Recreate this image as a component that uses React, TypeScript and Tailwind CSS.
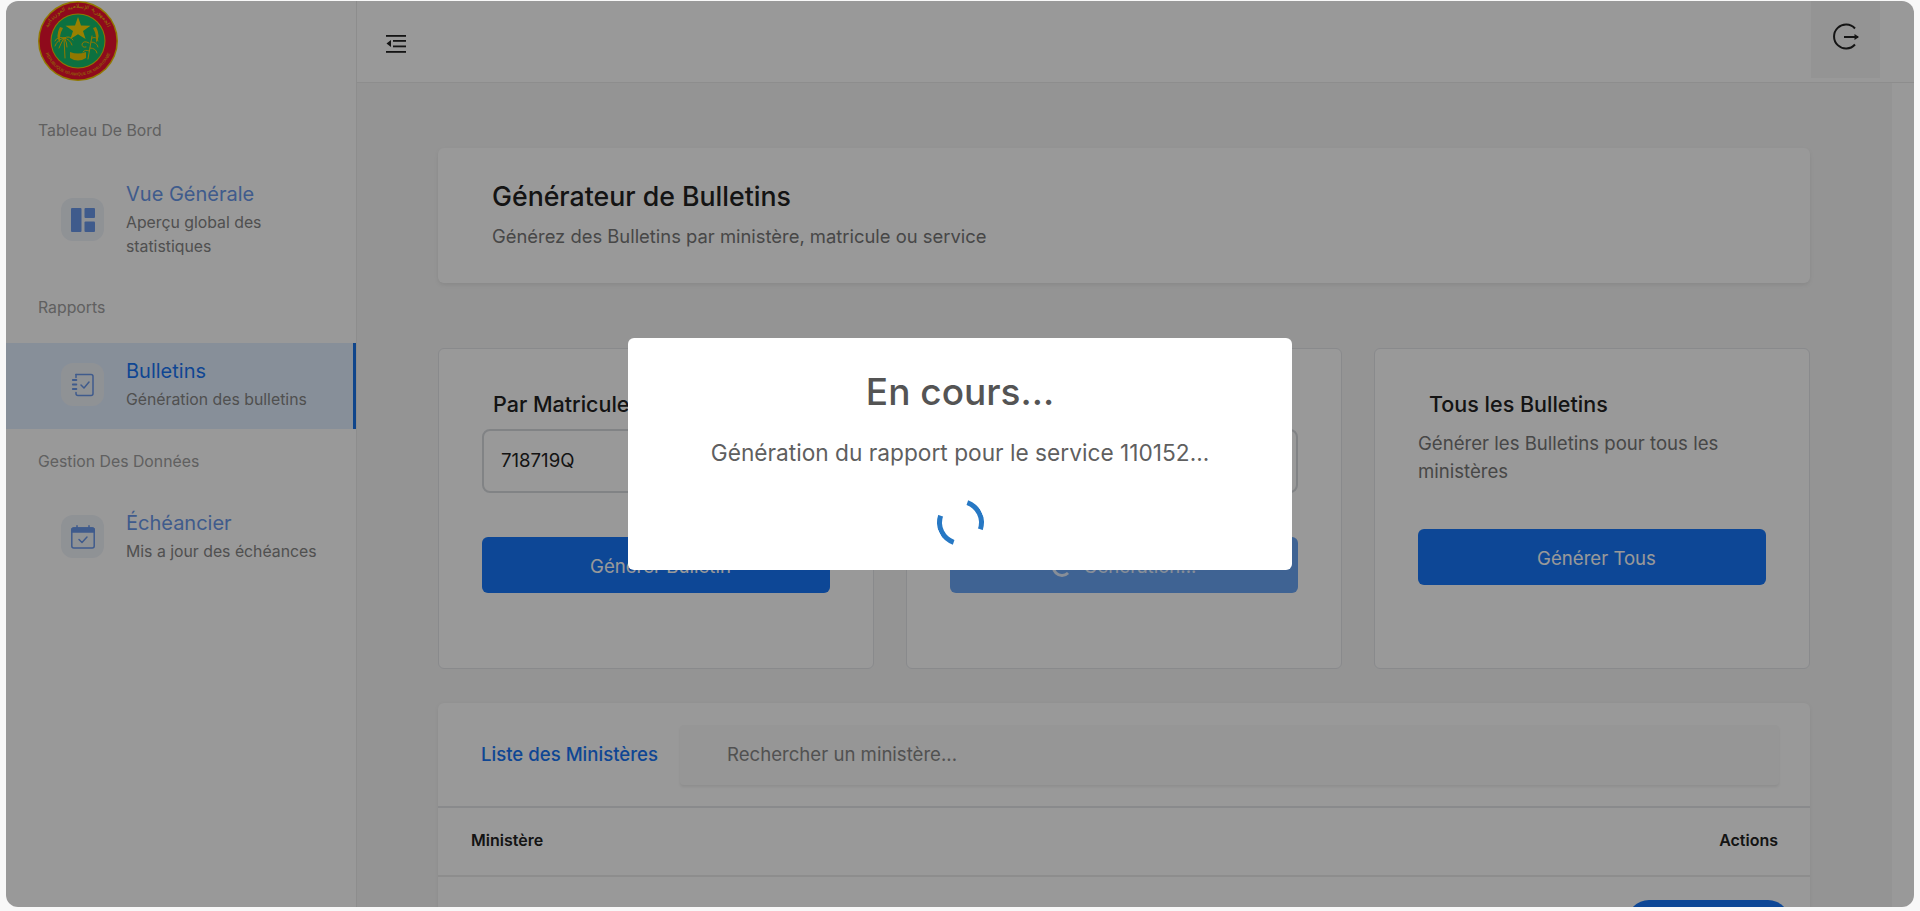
import type { ReactNode } from "react";

function Logo() {
  return (
    <svg width="80" height="80" viewBox="0 0 80 80" className="block">
      <defs>
        <path id="arcTop" d="M 7 40 A 33 33 0 0 1 73 40" />
        <path id="arcBottom" d="M 5.5 40 A 34.5 34.5 0 0 0 74.5 40" />
      </defs>
      <circle cx="40" cy="40" r="40" fill="#f2c800" />
      <circle cx="40" cy="40" r="38.5" fill="#ee1230" />
      <circle cx="40" cy="40" r="27.5" fill="#f2c800" />
      <circle cx="40" cy="40" r="26.5" fill="#14bd6c" />
      <text fontSize="5.6" fill="#f2c800" fontFamily="'Noto Sans', sans-serif" direction="rtl">
        <textPath href="#arcTop" startOffset="50%" textAnchor="middle">الجمهورية الإسلامية الموريتانية</textPath>
      </text>
      <text fontSize="4.1" fill="#f2c800" fontFamily="'Liberation Sans', sans-serif">
        <textPath href="#arcBottom" startOffset="50%" textAnchor="middle">REPUBLIQUE ISLAMIQUE DE MAURITANIE</textPath>
      </text>
      <polygon points="40,16 43,24.5 52.5,24.7 45,30 47.6,38 40,33.2 32.4,38 35,30 27.5,24.7 37,24.5" fill="#ffd800" />
      <path d="M22 26 q-5 9 0 16 q-1 -8 3 -15z" fill="#f2c800" />
      <path d="M58 26 q5 9 0 16 q1 -8 -3 -15z" fill="#f2c800" />
      <g stroke="#f2c800" strokeWidth="1" fill="none" strokeLinecap="round">
        <path d="M26 37 L27 57" />
        <path d="M26 37 q-7 -2 -9 3" />
        <path d="M26 37 q-7 2 -9 8" />
        <path d="M26 37 q-3 5 -5 10" />
        <path d="M26 37 q6 -3 9 2" />
        <path d="M26 37 q6 1 8 7" />
        <path d="M27 38 q2 4 2 8" />
        <path d="M54 35 L50 58" />
        <path d="M54 37 q5 -2 6 3" />
        <path d="M53 41 q6 0 7 5" />
        <path d="M52 47 q6 0 7 5" />
        <path d="M51 42 q-5 -3 -7 1 q0 4 4 3" />
        <path d="M51 50 q-4 -2 -6 1" />
      </g>
      <path d="M32 51 q8 3 16 0 v6 q-8 5 -16 0z" fill="#f2c800" />
    </svg>
  );
}

function NavItem({ icon, title, sub, active }: { icon: ReactNode; title: string; sub: ReactNode; active?: boolean }) {
  return (
    <div className={`flex items-center pl-[55px] pt-[14px] pb-[17px] gap-[22px] ${active ? "bg-[#e2efff] border-r-[3px] border-[#1a73e8]" : ""}`}>
      <div className="w-[43px] h-[43px] shrink-0 rounded-xl bg-[#eff3f9] flex items-center justify-center">{icon}</div>
      <div>
        <div className={`text-[20px] leading-7 ${active ? "text-[#1976f5]" : "text-[#6a98ea]"}`}>{title}</div>
        <div className="mt-[3px] text-[15.8px] leading-6 text-[#858585] w-[205px]">{sub}</div>
      </div>
    </div>
  );
}

function Label({ children, className }: { children: ReactNode; className: string }) {
  return <div className={`pl-8 text-[15.8px] leading-6 text-[#a0a0a0] ${className}`}>{children}</div>;
}

function PageCard({ children }: { children: ReactNode }) {
  return <div className="h-[321px] rounded-md bg-white border border-[#e4e6ea] px-[43px] pt-[41px]">{children}</div>;
}

export default function App() {
  return (
    <div
      className="h-screen w-full overflow-hidden bg-[#f8f8f8] pl-[6px] pr-[6px] pt-px pb-1"
      style={{ fontFamily: "Inter, 'Noto Sans', sans-serif" }}
    >
      <div className="relative h-[906px] w-full overflow-hidden rounded-[12px] flex bg-white">
        {/* Sidebar */}
        <aside className="w-[351px] shrink-0 border-r border-[#ebebeb] bg-white">
          <div className="pl-8 h-20">
            <Logo />
          </div>
          <Label className="mt-[38px] mb-[23px]">Tableau De Bord</Label>
          <NavItem
            title="Vue Générale"
            sub="Aperçu global des statistiques"
            icon={
              <svg width="24" height="24" viewBox="0 0 24 24" fill="#6a98ea">
                <rect x="0" y="0" width="10.5" height="24" rx="1" />
                <rect x="13.5" y="0" width="10.5" height="10" rx="1" />
                <rect x="13.5" y="13.5" width="10.5" height="10.5" rx="1" />
              </svg>
            }
          />
          <Label className="mt-5 mb-[23px]">Rapports</Label>
          <NavItem
            active
            title="Bulletins"
            sub="Génération des bulletins"
            icon={
              <svg width="24" height="24" viewBox="0 0 24 24" fill="none" stroke="#6a98ea" strokeWidth="1.5" strokeLinecap="round" strokeLinejoin="round">
                <path d="M5 1.5 h15 a2 2 0 0 1 2 2 v17 a2 2 0 0 1 -2 2 h-13 a2 2 0 0 1 -2 -2 v-1" />
                <path d="M5 1.5 v3" />
                <path d="M10 12 l3 3 l5 -6" />
                <path d="M1.8 7 h3.6 M1.8 11.5 h3.6 M1.8 16 h3.6" strokeWidth="1.8" />
              </svg>
            }
          />
          <Label className="mt-[21px] mb-[21px]">Gestion Des Données</Label>
          <NavItem
            title="Échéancier"
            sub="Mis a jour des échéances"
            icon={
              <svg width="24" height="24" viewBox="0 0 24 24" fill="none" stroke="#6a98ea" strokeWidth="1.5" strokeLinecap="round" strokeLinejoin="round">
                <rect x="0.8" y="3" width="22.4" height="20" rx="2" />
                <path d="M0.8 7 h22.4 v-2 a2 2 0 0 0 -2 -2 h-18.4 a2 2 0 0 0 -2 2z" fill="#6a98ea" />
                <path d="M6 0.8 v2 M18 0.8 v2" />
                <path d="M8 14.5 l3 3 l5 -5.5" />
              </svg>
            }
          />
        </aside>

        {/* Main */}
        <div className="flex-1 min-w-0 flex flex-col bg-[#f7f7f7]">
          <header className="h-[82px] shrink-0 bg-white border-b border-[#ebebeb] flex items-start justify-between pl-[29px] pr-[34px]">
            <svg width="20" height="18" viewBox="0 0 20 18" className="mt-[34px]" fill="#222">
              <rect x="0" y="0" width="20" height="1.8" />
              <rect x="7" y="5" width="13" height="1.8" />
              <rect x="7" y="10.5" width="13" height="1.8" />
              <rect x="0" y="16" width="20" height="1.8" />
              <polygon points="5,5 5,12 0.5,8.5" />
            </svg>
            <div className="w-[69px] h-[77px] bg-[#f7f7f7] flex items-start justify-center pt-[22px]">
              <svg width="28" height="28" viewBox="0 0 28 28" fill="none" stroke="#222" strokeWidth="2">
                <path d="M23 5.5 A12 12 0 1 0 23 21.5" />
                <path d="M12 14 h14" strokeWidth="1.8" />
                <polygon points="22.5,11 27,14 22.5,17" fill="#222" stroke="none" />
              </svg>
            </div>
          </header>

          <div className="flex-1 min-h-0 flex">
            <div className="flex-1 min-w-0 pl-[81px] pr-[82px] pt-[65px]">
              <div className="h-[135px] rounded-md bg-white shadow-[0_2px_4px_rgba(0,0,0,0.08)] px-[54px] pt-8">
                <h1 className="text-[26.7px] leading-8 font-medium text-[#222]">Générateur de Bulletins</h1>
                <p className="mt-[10px] text-[18.4px] leading-7 text-[#777]">Générez des Bulletins par ministère, matricule ou service</p>
              </div>

              <div className="mt-[65px] grid grid-cols-3 gap-8">
                <PageCard>
                  <h2 className="pl-[11px] text-[21.5px] leading-7 font-medium text-[#222]">Par Matricule</h2>
                  <div className="mt-[11px] h-[64px] rounded-lg border-2 border-[#d8dade] px-[17px] flex items-center text-[18.6px] text-[#222]">718719Q</div>
                  <button className="mt-[44px] w-full h-14 rounded-md bg-[#1677fa] pl-[9px] pt-[3px] text-[18.6px] text-white">Générer Bulletin</button>
                </PageCard>
                <PageCard>
                  <h2 className="pl-[11px] text-[21.5px] leading-7 font-medium text-[#222]">Par Service</h2>
                  <div className="mt-[11px] h-[64px] rounded-lg border-2 border-[#d8dade] px-[17px] flex items-center text-[18.6px] text-[#222]">110152</div>
                  <button className="mt-[44px] w-full h-14 rounded-md bg-[#6aa5f5] pt-[3px] text-[18.6px] text-white/80 flex items-center justify-center gap-3">
                    <span className="w-5 h-5 rounded-full border-[3px] border-white/80 border-r-transparent" />
                    Génération...
                  </button>
                </PageCard>
                <PageCard>
                  <h2 className="pl-[11px] text-[21.5px] leading-7 font-medium text-[#222]">Tous les Bulletins</h2>
                  <p className="mt-[11px] text-[18.6px] leading-7 text-[#777]">Générer les Bulletins pour tous les ministères</p>
                  <button className="mt-[44px] w-full h-14 rounded-md bg-[#1677fa] pl-[9px] pt-[3px] text-[18.6px] text-white">Générer Tous</button>
                </PageCard>
              </div>

              <div className="mt-[34px] rounded-t-md bg-white shadow-[0_1px_4px_rgba(0,0,0,0.06)]">
                <div className="h-[105px] border-b-2 border-[#e4e6ea] flex items-start pl-[43px] pr-[31px] pt-[22px] gap-[22px]">
                  <span className="mt-[15px] whitespace-nowrap text-[18.6px] leading-7 font-medium text-[#1976f5]">Liste des Ministères</span>
                  <div className="flex-1 h-[60px] bg-[#fafafa] rounded-sm shadow-[0_2px_3px_rgba(0,0,0,0.08)] pl-[47px] flex items-center text-[18.6px] text-[#888]">Rechercher un ministère...</div>
                </div>
                <div className="h-[69px] pb-[3px] border-b-2 border-[#ececec] flex items-center justify-between pl-[33px] pr-8 text-base font-semibold text-[#222]">
                  <span>Ministère</span>
                  <span>Actions</span>
                </div>
                <div className="flex justify-end pr-5 pt-[23px] pb-4">
                  <button className="w-[163px] h-11 rounded-full bg-[#1677fa]" />
                </div>
              </div>
            </div>
            {/* scrollbar track */}
            <div className="w-[22px] shrink-0 bg-white" />
          </div>
        </div>

        {/* Loading dialog */}
        <div className="absolute inset-0 bg-black/40 flex items-center justify-center">
          <div className="w-[664px] h-[232px] rounded-md bg-white flex flex-col items-center pt-8">
            <h2 className="text-[37px] leading-[44px] font-medium text-[#545454]">En cours...</h2>
            <p className="mt-6 text-[22.7px] leading-[30px] text-[#5f5f5f]">Génération du rapport pour le service 110152...</p>
            <div className="mt-[31px] w-[47px] h-[47px] rounded-full border-[5px] border-[#2778c4] border-x-transparent rotate-[64deg]" />
          </div>
        </div>
      </div>
    </div>
  );
}
